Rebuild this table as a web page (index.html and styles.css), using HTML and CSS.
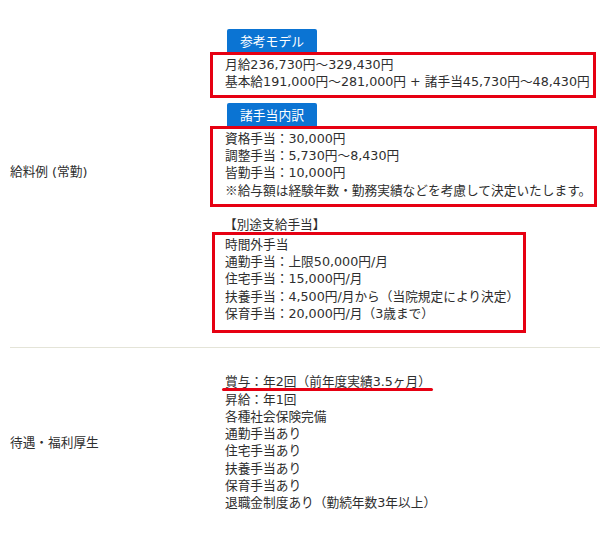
FILE: index.html
```html
<!DOCTYPE html>
<html lang="ja">
<head>
<meta charset="utf-8">
<link rel="stylesheet" href="styles.css">
</head>
<body>
<div class="table">
  <div class="row row-salary">
    <div class="label">給料例 (常勤)</div>
    <div class="content">
      <span class="tag">参考モデル</span>
      <div class="box">
        月給236,730円〜329,430円<br>
        基本給191,000円〜281,000円 + 諸手当45,730円〜48,430円
      </div>
      <span class="tag tag-2">諸手当内訳</span>
      <div class="box">
        資格手当：30,000円<br>
        調整手当：5,730円〜8,430円<br>
        皆勤手当：10,000円<br>
        <span class="cjk">※</span>給与額は経験年数・勤務実績などを考慮して決定いたします。
      </div>
      <div class="extra-title">【別途支給手当】</div>
      <div class="box box-3">
        時間外手当<br>
        通勤手当：上限50,000円/月<br>
        住宅手当：15,000円/月<br>
        扶養手当：4,500円/月から（当院規定により決定）<br>
        保育手当：20,000円/月（3歳まで）
      </div>
    </div>
  </div>
  <div class="row row-welfare">
    <div class="label">待遇・福利厚生</div>
    <div class="content">
      <span class="marker">賞与：年2回（前年度実績3.5ヶ月）</span><br>
      昇給：年1回<br>
      各種社会保険完備<br>
      通勤手当あり<br>
      住宅手当あり<br>
      扶養手当あり<br>
      保育手当あり<br>
      退職金制度あり（勤続年数3年以上）
    </div>
  </div>
</div>
</body>
</html>
```

FILE: styles.css
```css
html, body {
  margin: 0;
  padding: 0;
  background: #ffffff;
}

body {
  font-family: "DejaVu Sans", "Noto Sans CJK JP", sans-serif;
  font-size: 12.7px;
  line-height: 17.3px;
  color: #2e2e2e;
  width: 600px;
  height: 535px;
  overflow: hidden;
}

.cjk {
  font-family: "Noto Sans CJK JP", sans-serif;
}

.table {
  padding-left: 10px;
}

.row {
  display: grid;
  grid-template-columns: 215px 1fr;
  align-items: center;
}

.row-salary {
  border-bottom: 1px solid #e4e4d8;
  padding-top: 29px;
  padding-bottom: 14px;
}

.row-salary .label {
  margin-bottom: 18px;
}

.row-welfare {
  padding-top: 25px;
  padding-bottom: 26px;
}

.label {
  white-space: nowrap;
}

.content {
  white-space: nowrap;
}

.tag {
  display: inline-block;
  margin-left: 2px;
  padding: 0 13px;
  height: 23px;
  line-height: 23px;
  background: #0b74d3;
  color: #ffffff;
  border-radius: 2px 2px 0 0;
  font-family: "Noto Sans CJK JP", sans-serif;
  font-size: 12.8px;
  vertical-align: top;
}

.tag-2 {
  margin-top: 5px;
}

.box {
  width: fit-content;
  margin-left: -15px;
  border: 3px solid #e60012;
  padding: 1px 3px 4px 12px;
}

.box-3 {
  padding-left: 10px;
  padding-right: 4px;
  padding-bottom: 8px;
  margin-left: -13px;
}

.extra-title {
  margin-top: 11px;
  margin-left: -1px;
  line-height: 14px;
}

.marker {
  display: inline-block;
  position: relative;
}

.marker::after {
  content: "";
  position: absolute;
  left: -3px;
  right: -2px;
  top: 15px;
  height: 3px;
  border-radius: 2px;
  background: #e60012;
}
```
